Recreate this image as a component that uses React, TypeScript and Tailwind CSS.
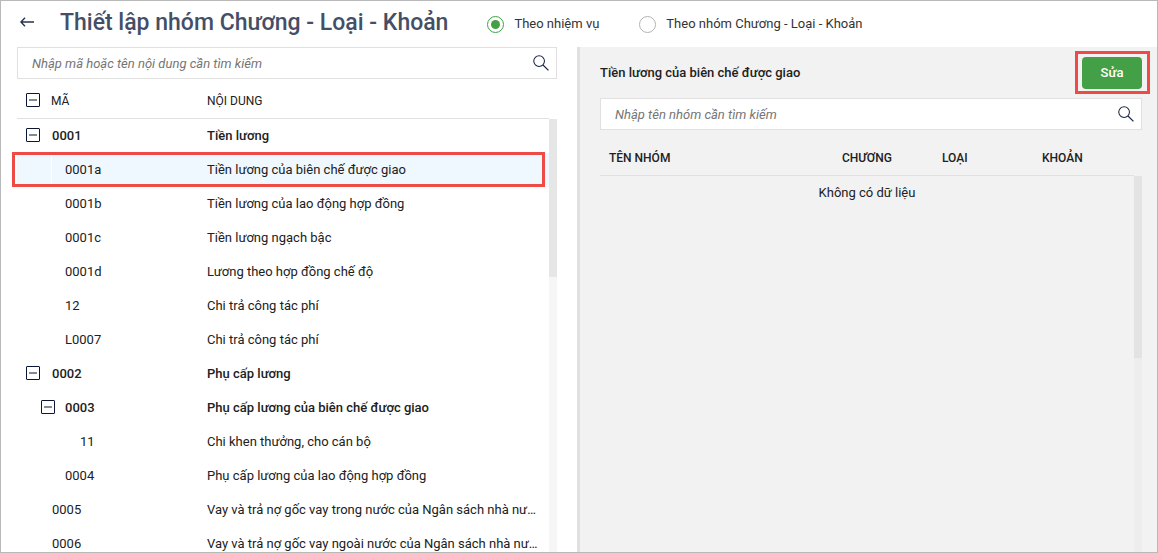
import { useState } from "react";

type Row = {
  code: string;
  name: string;
  level: number;
  group?: boolean;
};

const rows: Row[] = [
  { code: "0001", name: "Tiền lương", level: 0, group: true },
  { code: "0001a", name: "Tiền lương của biên chế được giao", level: 1 },
  { code: "0001b", name: "Tiền lương của lao động hợp đồng", level: 1 },
  { code: "0001c", name: "Tiền lương ngạch bậc", level: 1 },
  { code: "0001d", name: "Lương theo hợp đồng chế độ", level: 1 },
  { code: "12", name: "Chi trả công tác phí", level: 1 },
  { code: "L0007", name: "Chi trả công tác phí", level: 1 },
  { code: "0002", name: "Phụ cấp lương", level: 0, group: true },
  { code: "0003", name: "Phụ cấp lương của biên chế được giao", level: 1, group: true },
  { code: "11", name: "Chi khen thưởng, cho cán bộ", level: 2 },
  { code: "0004", name: "Phụ cấp lương của lao động hợp đồng", level: 1 },
  { code: "0005", name: "Vay và trả nợ gốc vay trong nước của Ngân sách nhà nước", level: 0 },
  { code: "0006", name: "Vay và trả nợ gốc vay ngoài nước của Ngân sách nhà nước", level: 0 },
];

const leafIndent = ["pl-0", "pl-[13px]", "pl-7"];
const groupIndent = ["pl-[9px] gap-3", "pl-6 gap-[10px]", "pl-9 gap-[10px]"];

function Toggle({ label }: { label: string }) {
  return (
    <button
      type="button"
      aria-label={label}
      className="mb-[2px] flex size-[14px] shrink-0 items-center justify-center rounded-[1px] border border-[#0b1535] bg-white"
    >
      <span className="h-[2px] w-2 bg-[#828a9a]" />
    </button>
  );
}

function SearchBox({ placeholder }: { placeholder: string }) {
  return (
    <div className="flex h-8 items-center border border-[#e0e0e0] bg-white pr-[7px] pl-[14px]">
      <input
        type="text"
        aria-label={placeholder}
        placeholder={placeholder}
        className="min-w-0 flex-1 bg-transparent pt-[2px] italic outline-none placeholder:text-[#757575]"
      />
      <button type="button" aria-label="Tìm kiếm">
        <svg viewBox="0 0 17 17" className="size-4" fill="none" stroke="#1a2644" strokeWidth="1.1">
          <circle cx="6.5" cy="6.5" r="5.7" />
          <path d="M10.6 10.6L16.4 16.4" strokeWidth="1.3" />
        </svg>
      </button>
    </div>
  );
}

export default function App() {
  const [mode, setMode] = useState("task");
  const [selected, setSelected] = useState("0001a");

  return (
    <div className="flex h-screen flex-col overflow-hidden border border-[#b9b9b9] bg-white font-[Roboto,sans-serif] text-[13px] leading-5 text-[#212121]">
      <header className="flex h-[46px] shrink-0 items-center pl-[19px]">
        <button type="button" aria-label="Quay lại" className="pb-1">
          <svg viewBox="0 0 14 10" className="h-[10px] w-[14px]" fill="none" stroke="#26324d" strokeWidth="1.4">
            <path d="M14 5H1M5 0.8L0.9 5L5 9.2" />
          </svg>
        </button>
        <h1 className="ml-[26px] pb-[2px] text-[23px] leading-8 font-medium text-[#444f66]">
          Thiết lập nhóm Chương - Loại - Khoản
        </h1>
        <div className="ml-[39px] flex items-center gap-10 text-[#333]">
          <label className="flex items-center gap-[10px]">
            <input
              type="radio"
              name="mode"
              checked={mode === "task"}
              onChange={() => setMode("task")}
              className="size-[17px] appearance-none rounded-full border border-[#b3b3b3] bg-clip-content p-[3px] checked:border-[#43a047] checked:bg-[#43a047]"
            />
            Theo nhiệm vụ
          </label>
          <label className="flex items-center gap-[10px]">
            <input
              type="radio"
              name="mode"
              checked={mode === "group"}
              onChange={() => setMode("group")}
              className="size-[17px] appearance-none rounded-full border border-[#b3b3b3] bg-clip-content p-[3px] checked:border-[#43a047] checked:bg-[#43a047]"
            />
            Theo nhóm Chương - Loại - Khoản
          </label>
        </div>
      </header>

      <main className="grid min-h-0 flex-1 grid-cols-[minmax(0,576fr)_minmax(0,580fr)]">
        <section className="flex min-h-0 flex-col pr-5 pl-4">
          <SearchBox placeholder="Nhập mã hoặc tên nội dung cần tìm kiếm" />
          <div className="flex min-h-0 flex-1">
            <table className="w-full min-w-0 flex-1 table-fixed self-start text-left">
              <thead>
                <tr className="h-[39px] border-b border-[#e0e0e0] text-xs">
                  <th className="w-[182px] pt-[6px] font-normal">
                    <div className="flex items-center gap-[11px] pl-[9px]">
                      <Toggle label="Thu gọn tất cả" />
                      MÃ
                    </div>
                  </th>
                  <th className="pt-[6px] pl-2 font-normal">NỘI DUNG</th>
                </tr>
              </thead>
              <tbody>
                {rows.map((row) => (
                  <tr
                    key={row.code}
                    onClick={() => setSelected(row.code)}
                    className={`relative h-[34px] ${row.code === selected ? "bg-[#eff7ff]" : ""} ${row.group ? "font-medium" : ""}`}
                  >
                    <td className="p-0">
                      {row.group ? (
                        <div className={`flex h-[34px] items-center ${groupIndent[row.level]}`}>
                          <Toggle label={`Thu gọn ${row.code}`} />
                          {row.code}
                        </div>
                      ) : (
                        <div className="flex h-[34px]">
                          <span className="w-[35px] border-r border-white" />
                          <span className={`self-center ${leafIndent[row.level]}`}>{row.code}</span>
                        </div>
                      )}
                      {row.code === selected && (
                        <span className="pointer-events-none absolute -top-px right-1 bottom-0 -left-[5px] border-3 border-[#ee4b46]" />
                      )}
                    </td>
                    <td className="truncate pr-[10px] pl-2">{row.name}</td>
                  </tr>
                ))}
              </tbody>
            </table>
            <div className="mt-10 w-2 bg-[#f6f6f6]">
              <div className="h-[158px] bg-[#e6e6e6]" />
            </div>
          </div>
        </section>

        <section className="flex min-h-0 flex-col border-l-3 border-[#e0e0e0] bg-[#f2f2f2] pt-[10px] pr-[15px] pl-5">
          <div className="mb-[9px] flex items-center justify-between">
            <h2 className="font-medium">Tiền lương của biên chế được giao</h2>
            <div className="relative">
              <button type="button" className="block h-8 w-[60px] rounded-[4px] bg-[#43a047] font-medium text-white">
                Sửa
              </button>
              <span className="pointer-events-none absolute -top-[6px] -right-2 -bottom-[5px] -left-[7px] border-3 border-[#ee4b46]" />
            </div>
          </div>
          <SearchBox placeholder="Nhập tên nhóm cần tìm kiếm" />
          <div className="flex min-h-0 flex-1">
            <table className="w-full min-w-0 flex-1 table-fixed self-start text-left">
              <thead>
                <tr className="h-[45px] border-b border-[#e0e0e0] text-xs">
                  <th className="pt-3 pl-[9px] font-medium">TÊN NHÓM</th>
                  <th className="w-[100px] pt-3 pl-2 font-medium">CHƯƠNG</th>
                  <th className="w-[100px] pt-3 pl-2 font-medium">LOẠI</th>
                  <th className="w-[100px] pt-3 pl-2 font-medium">KHOẢN</th>
                </tr>
              </thead>
              <tbody>
                <tr className="h-[34px]">
                  <td colSpan={4} className="pt-[2px] text-center">
                    Không có dữ liệu
                  </td>
                </tr>
              </tbody>
            </table>
            <div className="mt-[46px] w-2 bg-[#ededed]">
              <div className="h-[182px] bg-[#e3e3e3]" />
            </div>
          </div>
        </section>
      </main>
    </div>
  );
}
